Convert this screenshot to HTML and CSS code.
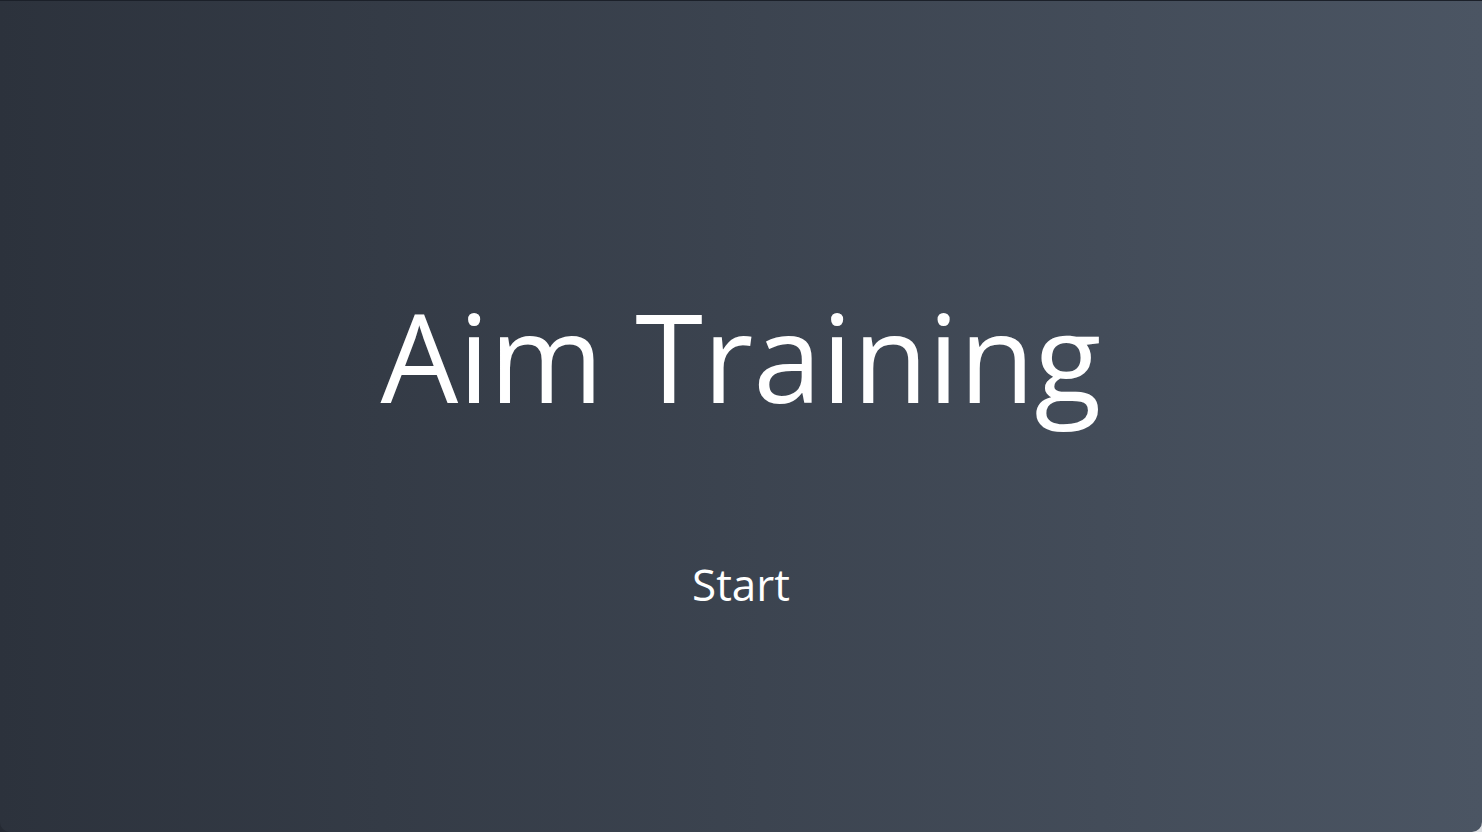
FILE: index.html
```html
<!DOCTYPE html>
<html lang="en">
<head>
<meta charset="utf-8">
<title>Aim Training</title>
<link rel="stylesheet" href="styles.css">
</head>
<body>
<main class="screen">
  <h1 class="title">Aim Training</h1>
  <button class="start">Start</button>
</main>
</body>
</html>
```

FILE: styles.css
```css
html, body {
  margin: 0;
  padding: 0;
  height: 100%;
}
body {
  background: linear-gradient(to right, #252a33, #d9dce0);
  font-family: "Open Sans", "Noto Sans", sans-serif;
}
.screen {
  box-sizing: border-box;
  height: 832px;
  padding-top: 54px;
  border-top: 1px solid #1b2029;
  border-radius: 0 0 10px 10px;
  background: linear-gradient(to right, #2c323c, #4b5563);
  display: flex;
  flex-direction: column;
  align-items: center;
  justify-content: center;
  color: #ffffff;
}
.title {
  margin: 0;
  font-size: 123px;
  font-weight: 400;
  line-height: 1.362;
}
.start {
  margin-top: 115px;
  background: transparent;
  border: none;
  color: #ffffff;
  font-family: inherit;
  font-size: 44px;
  padding: 0 16px;
  line-height: 1.362;
  cursor: pointer;
}
```
